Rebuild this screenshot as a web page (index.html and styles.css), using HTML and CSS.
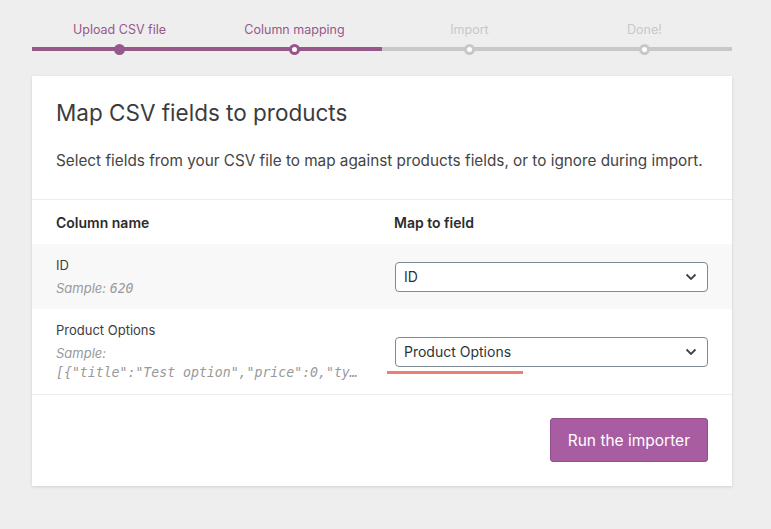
FILE: index.html
```html
<!DOCTYPE html>
<html lang="en">
<head>
<meta charset="utf-8">
<title>Product CSV importer</title>
<link rel="stylesheet" href="styles.css">
</head>
<body>
<div class="wrap">
  <ol class="steps">
    <li class="step done">
      <span class="step-label">Upload CSV file</span>
      <span class="track"><span class="dot"></span></span>
    </li>
    <li class="step active">
      <span class="step-label">Column mapping</span>
      <span class="track"><span class="dot"></span></span>
    </li>
    <li class="step">
      <span class="step-label">Import</span>
      <span class="track"><span class="dot"></span></span>
    </li>
    <li class="step">
      <span class="step-label">Done!</span>
      <span class="track"><span class="dot"></span></span>
    </li>
  </ol>

  <form class="card">
    <header class="card-header">
      <h2 class="title">Map CSV fields to products</h2>
      <p class="intro">Select fields from your CSV file to map against products fields, or to ignore during import.</p>
    </header>

    <div class="mapping">
      <div class="row head">
        <div class="cell">Column name</div>
        <div class="cell">Map to field</div>
      </div>
      <div class="row alt">
        <div class="cell name">
          <div>ID</div>
          <div class="desc">Sample: <code>620</code></div>
        </div>
        <div class="cell field">
          <div class="select"><span>ID</span><svg class="chev" viewBox="0 0 12 8" width="12" height="8"><path d="M1.5 1.5 6 6l4.5-4.5" fill="none" stroke="#3c434a" stroke-width="1.8"/></svg></div>
        </div>
      </div>
      <div class="row">
        <div class="cell name">
          <div>Product Options</div>
          <div class="desc">Sample: <code class="block">[{"title":"Test option","price":0,"type":"checkbox","options":[]}]</code></div>
        </div>
        <div class="cell field">
          <div class="select"><span>Product Options</span><svg class="chev" viewBox="0 0 12 8" width="12" height="8"><path d="M1.5 1.5 6 6l4.5-4.5" fill="none" stroke="#3c434a" stroke-width="1.8"/></svg></div>
          <span class="mark"></span>
        </div>
      </div>
    </div>

    <div class="actions">
      <button type="button" class="btn">Run the importer</button>
    </div>
  </form>
</div>
</body>
</html>
```

FILE: styles.css
```css
* { box-sizing: border-box; }
html, body { margin: 0; padding: 0; }
body {
  background: #eeeeee;
  font-family: Inter, "Noto Sans", Arial, sans-serif;
  color: #3c3c3c;
  height: 529px;
  overflow: hidden;
}
.wrap {
  width: 700px;
  margin-left: 32px;
  padding-top: 21px;
}
.steps {
  list-style: none;
  margin: 0;
  padding: 0;
  display: flex;
}
.step {
  flex: 1;
  display: flex;
  flex-direction: column;
  align-items: center;
}
.step-label {
  font-size: 12.5px;
  line-height: 18px;
  color: #c8c8c8;
}
.step.done .step-label,
.step.active .step-label { color: #96588a; }
.track {
  position: relative;
  display: block;
  width: 100%;
  height: 4px;
  margin-top: 8px;
  background: #c8c8c8;
}
.step.done .track,
.step.active .track { background: #96588a; }
.dot {
  position: absolute;
  left: 50%;
  top: 50%;
  width: 11px;
  height: 11px;
  margin: -5.5px 0 0 -5.5px;
  border-radius: 50%;
  background: #fff;
  border: 3.5px solid #c8c8c8;
}
.step.active .dot { border-color: #96588a; }
.step.done .dot { background: #96588a; border-color: #96588a; }

.card {
  margin-top: 25px;
  background: #fff;
  box-shadow: 0 1px 3px rgba(0,0,0,0.13);
}
.card-header {
  padding: 23px 24px 26px;
  border-bottom: 1px solid #ececec;
}
.title {
  margin: 0;
  font-size: 22.5px;
  line-height: 28px;
  font-weight: 400;
  color: #3c3c3c;
}
.intro {
  margin: 22px 0 0;
  font-size: 15.3px;
  line-height: 24px;
  color: #444;
  white-space: nowrap;
}
.row {
  display: grid;
  grid-template-columns: 338px 1fr;
  padding: 0 24px;
}
.row.head {
  height: 44px;
  align-items: center;
  font-size: 14px;
  font-weight: 600;
  color: #2c2c2c;
}
.row.alt { background: #f8f8f8; height: 65px; align-items: center; }
.row:not(.head):not(.alt) { height: 86px; align-items: center; border-bottom: 1px solid #ececec; }
.name { font-size: 13px; line-height: 18px; color: #3c3c3c; padding-right: 16px; min-width: 0; }
.desc {
  margin-top: 5px;
  font-style: italic;
  color: #999;
  line-height: 19px;
}
code {
  font-family: "DejaVu Sans Mono", "Liberation Mono", monospace;
  font-style: italic;
  font-size: 13.2px;
  color: #999;
}
code.block {
  display: block;
  width: 309px;
  white-space: nowrap;
  overflow: hidden;
  text-overflow: ellipsis;
}
.field { position: relative; padding-left: 1px; }
.select {
  height: 30px;
  border: 1px solid #7e8993;
  border-radius: 4px;
  background: #fff;
  display: flex;
  align-items: center;
  justify-content: space-between;
  padding: 0 10px 0 8px;
  font-size: 14px;
  color: #2c3338;
}
.chev { display: block; }
.mark {
  position: absolute;
  left: -7px;
  top: 34px;
  width: 136px;
  height: 3px;
  background: #ef7d75;
}
.actions {
  display: flex;
  justify-content: flex-end;
  padding: 23px 24px 24px;
}
.btn {
  height: 44px;
  padding: 0 17px;
  background: #a85ca1;
  border: 1px solid #934f8d;
  border-radius: 3px;
  color: #fff;
  font-family: inherit;
  font-size: 15.5px;
}
```
